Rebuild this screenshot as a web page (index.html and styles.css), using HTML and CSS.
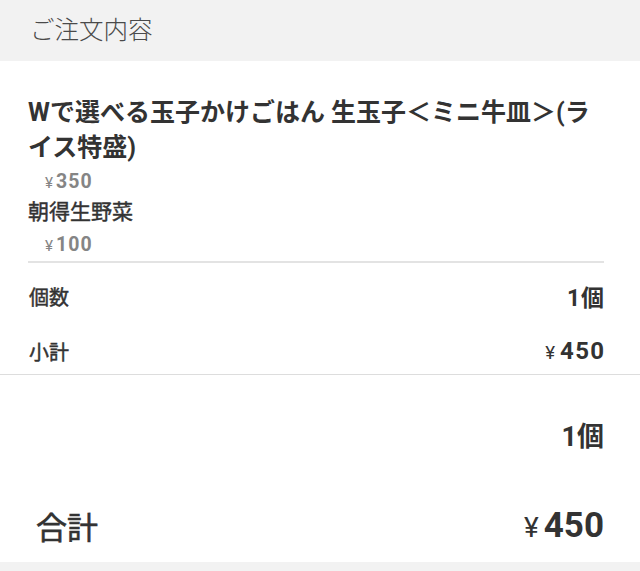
FILE: index.html
```html
<!DOCTYPE html>
<html lang="ja">
<head>
<meta charset="utf-8">
<title>ご注文内容</title>
<link rel="stylesheet" href="styles.css">
</head>
<body>
<div class="page">
  <header class="section-title">ご注文内容</header>
  <section class="order">
    <div class="item">
      <div class="item-name">Wで選べる玉子かけごはん 生玉子＜ミニ牛皿＞(ライス特盛)</div>
      <div class="item-price"><span class="yen">¥</span>350</div>
      <div class="option-name">朝得生野菜</div>
      <div class="option-price"><span class="yen">¥</span>100</div>
    </div>
    <div class="item-summary">
      <div class="row"><span class="label">個数</span><span class="value">1個</span></div>
      <div class="row"><span class="label">小計</span><span class="value money"><span class="yen">¥</span>450</span></div>
    </div>
  </section>
  <section class="totals">
    <div class="total-qty">1個</div>
    <div class="total-row"><span class="total-label">合計</span><span class="total-value"><span class="yen">¥</span>450</span></div>
  </section>
  <footer class="bottom-band"></footer>
</div>
</body>
</html>
```

FILE: styles.css
```css
* { box-sizing: border-box; }
html, body { margin: 0; padding: 0; }
body {
  background: #f2f2f2;
  font-family: "Roboto", "Noto Sans CJK JP", sans-serif;
  color: #333;
}
.page { width: 640px; }
.section-title {
  height: 61px;
  line-height: 61px;
  padding-left: 30px;
  font-size: 24.5px;
  font-weight: 300;
  color: #4a4a4a;
  background: #f2f2f2;
}
.order {
  background: #fff;
  padding: 34px 36px 0 28px;
  border-bottom: 1px solid #ddd;
}
.item {
  border-bottom: 2px solid #e3e3e3;
}
.item-name {
  font-size: 25px;
  line-height: 35px;
  font-weight: 700;
  color: #333;
}
.item-price, .option-price {
  padding-left: 17px;
  font-size: 19.5px;
  font-weight: 700;
  color: #858585;
  letter-spacing: 1px;
}
.item-price { line-height: 33px; }
.option-price { line-height: 30px; margin-top: 5px; }
.option-name {
  font-size: 21px;
  line-height: 25px;
  font-weight: 400;
  color: #333;
  -webkit-text-stroke: 0.45px currentColor;
}
.yen {
  font-weight: 400;
  font-size: 0.78em;
  margin-right: 3px;
  letter-spacing: 0;
}
.item-summary {
  display: flex;
  flex-direction: column;
  gap: 9px;
  padding: 10px 0 0 1px;
}
.row {
  display: flex;
  justify-content: space-between;
  align-items: center;
  height: 46px;
  font-size: 20px;
}
.row .label {
  font-weight: 400;
  -webkit-text-stroke: 0.45px currentColor;
}
.row .value { font-weight: 700; font-size: 23px; letter-spacing: 0.8px; margin-right: -0.8px; }
.row .value.money { font-size: 24px; letter-spacing: 1.3px; margin-right: -1.3px; }
.row .value .yen { margin-right: 5px; }
.totals {
  background: #fff;
  padding: 42px 36px 14px 36px;
  display: flex;
  flex-direction: column;
  gap: 45px;
}
.total-qty {
  text-align: right;
  line-height: 40px;
  font-size: 27px;
  font-weight: 700;
}
.total-row {
  display: flex;
  justify-content: space-between;
  align-items: center;
  height: 46px;
}
.total-label {
  font-size: 31px;
  font-weight: 400;
  -webkit-text-stroke: 0.6px currentColor;
}
.total-value { font-size: 35px; font-weight: 700; }
.total-value .yen { margin-right: 5px; font-size: 0.8em; }
.bottom-band { height: 8px; background: #f2f2f2; }
```
